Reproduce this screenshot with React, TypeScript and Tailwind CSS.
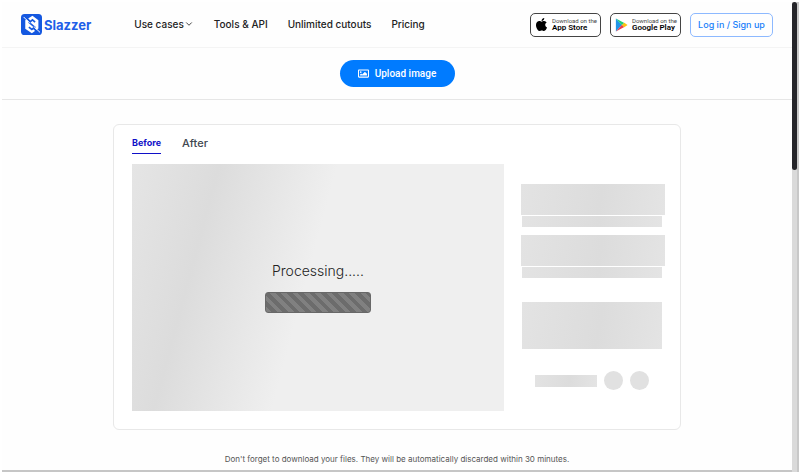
import React, { useState } from "react";
import { ChevronDown } from "lucide-react";
import { FaApple, FaRegImage } from "react-icons/fa";

const NAV_LINKS = ["Tools & API", "Unlimited cutouts", "Pricing"];

function Logo() {
  return (
    <a href="#" className="flex items-center gap-[2px]">
      <svg viewBox="0 0 64 64" className="size-[21px]" aria-hidden="true">
        <rect width="64" height="64" rx="11" fill="#1558e0" />
        <path d="M35 5 L53 19 V44 L33 59 L13 45 V19 Z" fill="#fff" />
        <path
          d="M43 25 L35 18 L25 26 L42 40 L33 47 L24 40"
          fill="none"
          stroke="#1558e0"
          strokeWidth="5"
        />
        <path d="M12 7 L28 24 M38 43 L56 60" stroke="#1558e0" strokeWidth="6" />
        <path d="M8 9 L27 28 M39 38 L58 56" stroke="#fff" strokeWidth="3" />
      </svg>
      <span className="text-[13px] leading-5 font-bold text-[#1f5fe8]">
        Slazzer
      </span>
    </a>
  );
}

function PlayIcon() {
  return (
    <svg viewBox="0 0 26 30" className="h-[14px] w-[13px]" aria-hidden="true">
      <path d="M1 1 L14 15 L1 29 Z" fill="#2196e8" />
      <path d="M1 1 L19 10.5 L14 15.5 Z" fill="#1fcf78" />
      <path d="M1 29 L19 19.5 L14 14.5 Z" fill="#ee3d4a" />
      <path d="M19 10 L26 15 L19 20 L14 15 Z" fill="#fbc210" />
    </svg>
  );
}

function StoreBadge({
  icon,
  store,
}: {
  icon: React.ReactNode;
  store: string;
}) {
  return (
    <a
      href="#"
      className="flex h-[24px] w-[71px] items-center gap-1 rounded-[5px] border border-[#444] bg-white pl-1 whitespace-nowrap text-black"
    >
      {icon}
      <span className="flex flex-col font-[Roboto,sans-serif]">
        <span className="text-[6px] leading-[7px] text-[#444]">
          Download on the
        </span>
        <span className="text-[8px] leading-[8px] font-semibold">{store}</span>
      </span>
    </a>
  );
}

function Header() {
  return (
    <header className="flex h-[46px] items-center border-b border-[#f4f4f4] pr-[19px] pl-[19px] whitespace-nowrap">
      <Logo />
      <nav className="ml-[43px] flex items-center gap-5 pb-[2px] text-[10px] leading-4 font-medium text-[#222]">
        <button type="button" className="flex items-center">
          Use cases
          <ChevronDown className="size-[10px]" />
        </button>
        {NAV_LINKS.map((link) => (
          <a key={link} href="#">
            {link}
          </a>
        ))}
      </nav>
      <div className="ml-auto flex items-center gap-[9px]">
        <StoreBadge
          icon={<FaApple className="h-[15px] w-[13px]" />}
          store="App Store"
        />
        <StoreBadge icon={<PlayIcon />} store="Google Play" />
        <a
          href="#"
          className="flex h-[24px] w-[83px] items-center justify-center rounded-[5px] border border-[#8db9ff] text-[9px] font-medium text-[#1a80fa]"
        >
          Log in / Sign up
        </a>
      </div>
    </header>
  );
}

function Skeleton({ className }: { className: string }) {
  return (
    <div
      className={`bg-[linear-gradient(100deg,#e3e3e3_0%,#dcdcdc_55%,#e4e4e4_100%)] ${className}`}
    />
  );
}

function SidePanel() {
  return (
    <div className="flex w-[144px] flex-col pt-5">
      <Skeleton className="h-[31px]" />
      <Skeleton className="mt-px mr-[3px] ml-px h-[11px]" />
      <Skeleton className="mt-2 h-[31px]" />
      <Skeleton className="mt-px mr-[3px] ml-px h-[11px]" />
      <Skeleton className="mt-6 mr-[3px] ml-px h-[47px]" />
      <div className="mt-[22px] ml-[14px] flex items-center gap-[7px]">
        <Skeleton className="h-3 w-[62px]" />
        <div className="size-[19px] rounded-full bg-[#e1e1e1]" />
        <div className="size-[19px] rounded-full bg-[#e1e1e1]" />
      </div>
    </div>
  );
}

function Preview() {
  return (
    <div className="flex h-[247px] flex-1 flex-col items-center bg-[linear-gradient(105deg,#e5e5e5_0%,#dcdcdc_20%,#efefef_47%)] pt-[97px]">
      <p className="text-[14px] leading-5 font-light text-[#222]">
        Processing.....
      </p>
      <div
        role="progressbar"
        aria-label="Processing"
        className="mt-[11px] h-[21px] w-[106px] rounded-[3px] border border-[#686868] bg-[repeating-linear-gradient(45deg,#808080_0px,#808080_4px,#6c6c6c_4px,#6c6c6c_8px)]"
      />
    </div>
  );
}

export default function App() {
  const [tab, setTab] = useState("Before");

  return (
    <div className="flex min-h-screen bg-white pt-[2px] pr-[1px] pb-px pl-[2px] font-[Inter,sans-serif]">
      <div className="flex min-w-0 flex-1 flex-col border-b-2 border-[#c6c6c6] bg-[#fefefe]">
        <Header />
        <div className="flex h-[52px] items-center justify-center border-b border-[#e6e6e6]">
          <button
            type="button"
            className="flex h-[27px] w-[115px] items-center justify-center gap-[6px] rounded-full bg-[#007bff] font-[Roboto,sans-serif] text-[10px] font-medium text-white"
          >
            <FaRegImage className="size-[11px]" />
            Upload image
          </button>
        </div>

        <main className="mx-auto mt-6 w-full max-w-[568px] rounded-[6px] border border-[#e8e8e8] bg-white pr-[15px] pb-[18px] pl-[18px]">
          <div role="tablist" className="flex items-start gap-[21px] pt-[11px]">
            {["Before", "After"].map((name) => (
              <button
                key={name}
                type="button"
                role="tab"
                aria-selected={tab === name}
                onClick={() => setTab(name)}
                className={
                  tab === name
                    ? "border-b border-[#1010c8] pb-[3px] text-[9px] leading-[14px] font-bold text-[#1010c8]"
                    : "text-[11px] leading-[14px] font-medium text-[#424850]"
                }
              >
                {name}
              </button>
            ))}
          </div>
          <div className="mt-[10px] flex gap-[17px]">
            <Preview />
            <SidePanel />
          </div>
        </main>

        <p className="mt-[23px] text-center text-[8px] leading-3 text-[#555]">
          Don't forget to download your files. They will be automatically
          discarded within 30 minutes.
        </p>
      </div>

      <div className="w-[7px] border-r-2 border-[#c8c8c8] bg-[#dadada]">
        <div className="h-[168px] rounded-full bg-[#25252a]" />
      </div>
    </div>
  );
}
